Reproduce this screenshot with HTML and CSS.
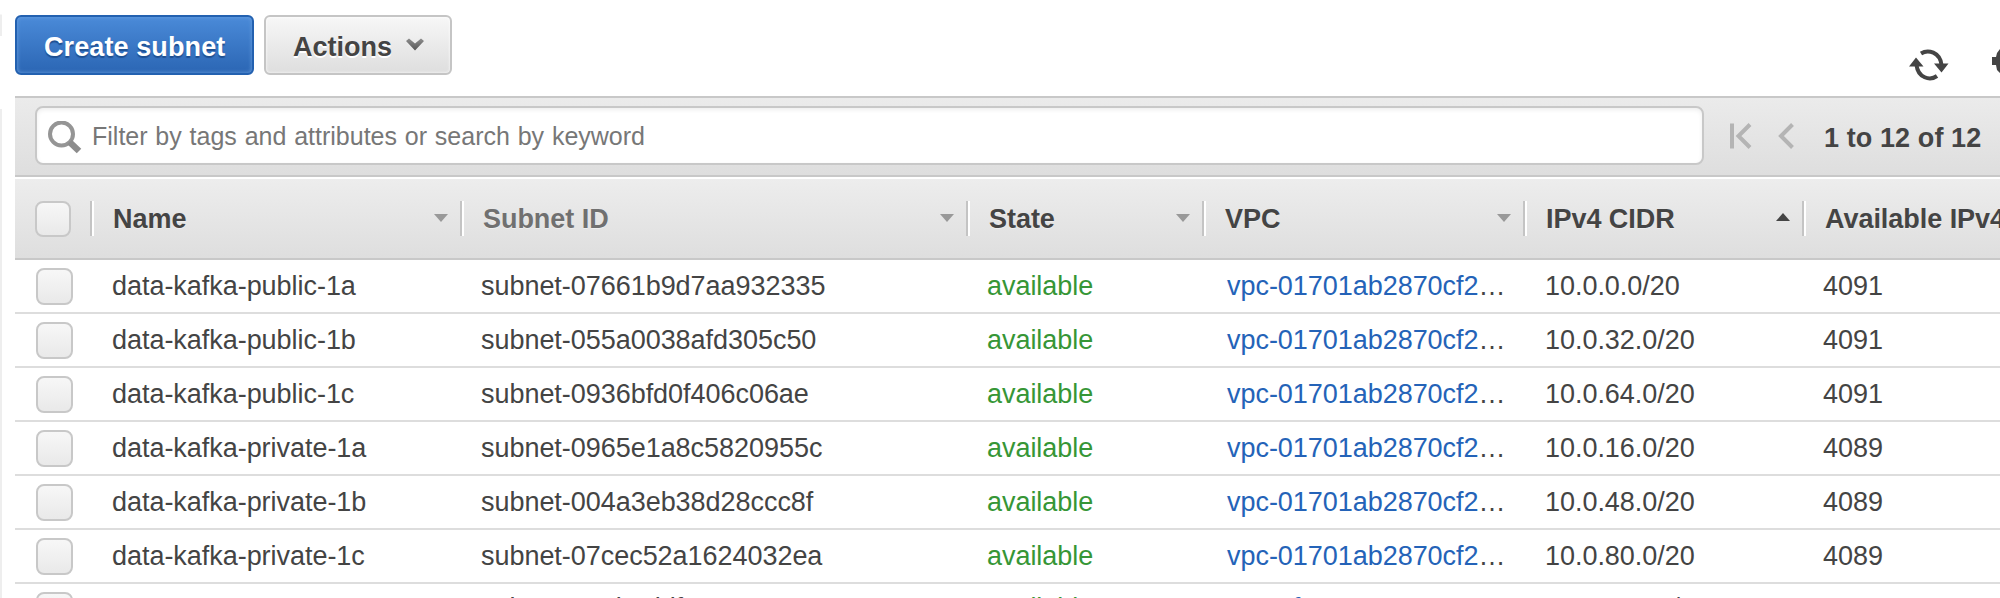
FILE: index.html
```html
<!DOCTYPE html>
<html lang="en">
<head>
<meta charset="utf-8">
<title>Subnets</title>
<link rel="stylesheet" href="styles.css">
</head>
<body>
<div class="app">
<aside class="rail"><div class="rail-top"></div><div class="rail-gap"></div><div class="rail-body"></div></aside>
<main class="main">
<header class="toolbar">
<button class="btn primary">Create subnet</button>
<button class="btn">Actions<svg class="caret" viewBox="0 0 18 13" width="18" height="13"><defs><linearGradient id="g" x2="0" y2="1"><stop stop-color="#8e8e8e"/><stop offset="1" stop-color="#555"/></linearGradient></defs><path d="M0 3 3 0.500 9 5.500 15 0.500 18 3 9 12.500Z" fill="url(#g)"/></svg></button>
<div class="tools">
<svg width="40" height="32" viewBox="0 0 40 32"><g fill="none" stroke="#444" stroke-width="4"><path d="M12 4.500C19 0 31 3 32.500 16"/><path d="M28 27C21 32 9 29 7.500 16"/></g><path d="M25 14.500H39.500L32.500 23.500ZM0 17.500 7 8.500 14.500 17.500Z" fill="#444"/></svg>
<svg class="gear" width="28" height="28" viewBox="0 0 28 28"><path d="M8 0H20L24 8H28V17H24L20 24H8L5 21 4 16H0V8H4L5 4Z" fill="#444"/></svg>
</div>
</header>
<section class="filter">
<div class="search"><svg width="34" height="34" viewBox="0 0 34 34"><circle cx="13.500" cy="13" r="11.500" fill="none" stroke="#959595" stroke-width="4"/><path d="M21.500 21 31 30" stroke="#8c8c8c" stroke-width="6.500"/></svg><span class="hint">Filter by tags and attributes or search by keyword</span></div>
<svg class="pager" width="64" height="26" viewBox="0 0 64 26"><path d="M2 0.500V25.500M20 1.500 8.500 13 20 24.500M62.500 1.500 51 13 62.500 24.500" fill="none" stroke="#b4b4b4" stroke-width="4"/></svg>
<strong class="count">1 to 12 of 12</strong>
</section>
<section class="grid">
<div class="row head"><div class="pick"><i class="check"></i></div>
<div class="cell">Name<svg class="sort" viewBox="0 0 14 8"><path d="M0 0H14L7 8Z"/></svg></div>
<div class="cell muted">Subnet ID<svg class="sort" viewBox="0 0 14 8"><path d="M0 0H14L7 8Z"/></svg></div>
<div class="cell">State<svg class="sort" viewBox="0 0 14 8"><path d="M0 0H14L7 8Z"/></svg></div>
<div class="cell">VPC<svg class="sort" viewBox="0 0 14 8"><path d="M0 0H14L7 8Z"/></svg></div>
<div class="cell">IPv4 CIDR<svg class="sort up" viewBox="0 0 14 8"><path d="M0 8H14L7 0Z"/></svg></div>
<div class="cell">Available IPv4</div></div>
<div class="row"><div class="pick"><i class="check"></i></div><div class="cell name">data-kafka-public-1a</div><div class="cell">subnet-07661b9d7aa932335</div><div class="cell ok">available</div><div class="cell vpc"><a>vpc-01701ab2870cf2</a>…</div><div class="cell cidr">10.0.0.0/20</div><div class="cell">4091</div></div>
<div class="row"><div class="pick"><i class="check"></i></div><div class="cell name">data-kafka-public-1b</div><div class="cell">subnet-055a0038afd305c50</div><div class="cell ok">available</div><div class="cell vpc"><a>vpc-01701ab2870cf2</a>…</div><div class="cell cidr">10.0.32.0/20</div><div class="cell">4091</div></div>
<div class="row"><div class="pick"><i class="check"></i></div><div class="cell name">data-kafka-public-1c</div><div class="cell">subnet-0936bfd0f406c06ae</div><div class="cell ok">available</div><div class="cell vpc"><a>vpc-01701ab2870cf2</a>…</div><div class="cell cidr">10.0.64.0/20</div><div class="cell">4091</div></div>
<div class="row"><div class="pick"><i class="check"></i></div><div class="cell name">data-kafka-private-1a</div><div class="cell">subnet-0965e1a8c5820955c</div><div class="cell ok">available</div><div class="cell vpc"><a>vpc-01701ab2870cf2</a>…</div><div class="cell cidr">10.0.16.0/20</div><div class="cell">4089</div></div>
<div class="row"><div class="pick"><i class="check"></i></div><div class="cell name">data-kafka-private-1b</div><div class="cell">subnet-004a3eb38d28ccc8f</div><div class="cell ok">available</div><div class="cell vpc"><a>vpc-01701ab2870cf2</a>…</div><div class="cell cidr">10.0.48.0/20</div><div class="cell">4089</div></div>
<div class="row"><div class="pick"><i class="check"></i></div><div class="cell name">data-kafka-private-1c</div><div class="cell">subnet-07cec52a1624032ea</div><div class="cell ok">available</div><div class="cell vpc"><a>vpc-01701ab2870cf2</a>…</div><div class="cell cidr">10.0.80.0/20</div><div class="cell">4089</div></div>
<div class="row last"><div class="pick"><i class="check"></i></div><div class="cell name"></div><div class="cell">subnet-560b8ddf</div><div class="cell ok">available</div><div class="cell vpc"><a>vpc-4feaa488</a></div><div class="cell cidr">172.31.0.0/20</div><div class="cell">4091</div></div>
</section>
</main>
</div>
</body>
</html>
```
FILE: styles.css
```css
* { box-sizing: border-box; }
body { margin: 0; background: #fff; color: #444; font: 27px/34px "Liberation Sans", Arial, sans-serif; overflow: hidden; }
.app { display: flex; width: 2000px; height: 598px; overflow: hidden; }
.rail { width: 2px; margin-right: 13px; flex: none; display: flex; flex-direction: column; }
.rail-top { height: 36px; background: linear-gradient(#fff 14px, #eee 15px); }
.rail-gap { height: 73px; }
.rail-body { flex: 1; background: #eee; }
.main { flex: none; width: 1985px; }
.toolbar { height: 96px; padding-top: 15px; display: flex; align-items: flex-start; }
.btn { height: 60px; width: 188px; margin-right: 10px; padding: 3px 0 0 27px; display: flex; align-items: center; font: bold 27px/34px "Liberation Sans", Arial, sans-serif; color: #444; border: 2px solid #c5c5c5; border-radius: 6px; background: linear-gradient(#f7f7f7, #dedede); box-shadow: inset 0 0 3px #fff; text-shadow: 0 2px 0 #fff; white-space: nowrap; }
.primary { width: 239px; color: #fff; border-color: #2361b0; background: linear-gradient(#4a8ad8, #2b66b4); box-shadow: inset 0 0 4px #6aa0e0; text-shadow: 0 2px 1px #1e4f91; letter-spacing: 0.1px; }
.caret { margin: -4px 0 0 14px; }
.tools { margin-left: auto; width: 91px; padding-top: 34px; display: flex; gap: 43px; overflow: hidden; }
.tools svg { flex: none; }
.filter { height: 81px; border-top: 2px solid #c8c8c8; border-bottom: 2px solid #c8c8c8; background: linear-gradient(#ebebeb, #dedede); display: flex; align-items: flex-start; padding: 8px 0 0 20px; }
.search { width: 1669px; height: 59px; border: 2px solid #c8c8c8; border-radius: 8px; background: #fff; box-shadow: inset 0 2px 4px #eee; display: flex; align-items: center; padding-left: 11px; gap: 10px; font-size: 25px; color: #777; }
.search svg { margin-top: 4px; }
.hint { width: 553px; white-space: nowrap; text-align-last: justify; }
.pager { margin: 17px 0 0 26px; }
.count { margin: 15px 0 0 30px; white-space: nowrap; letter-spacing: 0.1px; }
.row { display: grid; grid-template-columns: 76px 370px 506px 236px 321px 279px 197px; height: 54px; border-bottom: 2px solid #ddd; align-items: center; }
.cell { padding-left: 20px; white-space: nowrap; display: flex; align-items: center; letter-spacing: -0.04px; }
.name, .cidr { padding-left: 21px; }
.pick { padding-left: 21px; display: flex; }
.check { width: 37px; height: 37px; border: 2px solid #c8c8c8; border-radius: 8px; background: linear-gradient(#f7f7f7, #e9e9e9); }
.head { height: 83px; grid-template-columns: 75px 370px 506px 236px 321px 279px 198px; border-top: 2px solid #fff; border-bottom-color: #c8c8c8; background: linear-gradient(#ededed, #dedede); font-weight: bold; }
.head .cell { height: 35px; border-left: 2px solid #c4c4c4; box-shadow: inset 2px 0 #fff; padding-left: 21px; text-shadow: 0 1px #eee; }
.head .pick { padding-left: 20px; }
.head .check { width: 36px; height: 36px; }
.head .muted { color: #707070; }
.sort { width: 14px; height: 8px; margin: -2px 12px 0 auto; fill: #999; }
.sort.up { fill: #444; margin-top: -4px; }
.ok { color: #369636; }
.vpc { padding-left: 24px; }
.vpc a { color: #2463b8; }
.last .cell { padding-bottom: 4px; }
```
